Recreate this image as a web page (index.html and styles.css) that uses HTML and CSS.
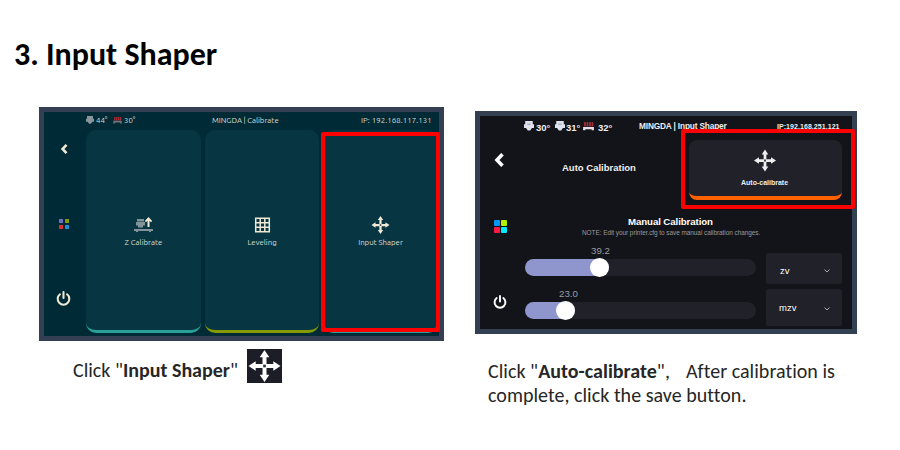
FILE: index.html
```html
<!DOCTYPE html>
<html lang="en">
<head>
<meta charset="utf-8">
<title>Input Shaper</title>
<link rel="stylesheet" href="styles.css">
</head>
<body>
<svg class="defs" aria-hidden="true">
  <symbol id="move" viewBox="0 0 24 24"><path fill="currentColor" d="M12 0l3.600 5.400h-2.100v5.100h5.100V8.400L24 12l-5.400 3.600v-2.100h-5.100v5.100h2.100L12 24l-3.600-5.400h2.100v-5.100H5.400v2.100L0 12l5.400-3.600v2.100h5.100V5.400H8.400z"/><path class="hub" d="M11 11h2v2h-2z"/></symbol>
  <symbol id="power" viewBox="0 0 16 16"><path fill="none" stroke="currentColor" stroke-width="2.200" stroke-linecap="round" d="M8 1.200v6.300M4.200 3.500a6.200 6.200 0 1 0 7.600 0"/></symbol>
  <symbol id="back" viewBox="0 0 10 14"><path fill="none" stroke="currentColor" stroke-width="3.600" d="M8.500 1.200L3 7l5.500 5.800"/></symbol>
  <symbol id="nozzle" viewBox="0 0 12 12"><path fill="currentColor" d="M1.500 0h9v4H12v4.500H9.500L7.500 11.500h-3L2.500 8.500H0V4h1.500z"/><path class="vent" d="M4 3.800h4"/></symbol>
  <symbol id="bed" viewBox="0 0 12 10"><path class="heat" d="M1.700 0l.6 2.500-.6 2.500M4.500 0l.6 2.500-.6 2.500M7.300 0l.6 2.500-.6 2.500M10 0l.6 2.500L10 5"/><path fill="currentColor" d="M0 5.500h12v3.700H9.500V8h-7v1.200H0z"/></symbol>
  <symbol id="chevron" viewBox="0 0 6 4"><path fill="none" stroke="currentColor" d="M.5.5L3 3 5.500.5"/></symbol>
</svg>
<main class="page">
  <h1>3. Input Shaper</h1>
  <div class="columns">
    <section class="left">
      <div class="screen teal">
        <nav class="side">
          <svg class="back"><use href="#back"/></svg>
          <div class="apps"><i></i><i></i><i></i><i></i></div>
          <svg class="power"><use href="#power"/></svg>
        </nav>
        <div class="body">
          <header class="bar">
            <svg class="ic-n"><use href="#nozzle"/></svg><span class="t1">44°</span>
            <svg class="ic-b"><use href="#bed"/></svg><span class="t2">30°</span>
            <span class="title">MINGDA<i>|</i>Calibrate</span><span class="ip">IP: 192.168.117.131</span>
          </header>
          <div class="cards">
            <div class="card cyan">
              <svg viewBox="0 0 19 18"><path fill="#82939a" d="M3 3h7v2.500H3zM2 6h9v3.500H2zM4 9.500h5v2H4zM0 13h19v2h-2v1h-2v-1H4v1H2v-1H0z"/><path fill="#eee8d5" d="M14.500 1L18.200 5 17 6.200l-1.500-1.500V11h-2V4.700L12 6.200 10.800 5z"/></svg>
              <span>Z Calibrate</span>
            </div>
            <div class="card olive">
              <svg viewBox="0 0 18 18"><path fill="none" stroke="#eee8d5" stroke-width="1.500" d="M2.200 2.200h13.600v13.600H2.200zM6.700 2.200v13.600M11.300 2.200v13.600M2.200 6.700h13.600M2.200 11.300h13.600"/></svg>
              <span>Leveling</span>
            </div>
            <div class="card cyan">
              <svg><use href="#move"/></svg>
              <span>Input Shaper</span>
            </div>
          </div>
        </div>
        <div class="mark"></div>
      </div>
      <p class="caption"><span>Click "<b>Input Shaper</b>"</span><svg><use href="#move"/></svg></p>
    </section>
    <section class="right">
      <div class="screen dark">
        <nav class="side">
          <svg class="back"><use href="#back"/></svg>
          <div class="apps"><i></i><i></i><i></i><i></i></div>
          <svg class="power"><use href="#power"/></svg>
        </nav>
        <div class="body">
          <header class="bar">
            <svg class="ic-n"><use href="#nozzle"/></svg><span class="t1">30°</span>
            <svg class="ic-n"><use href="#nozzle"/></svg><span class="t2">31°</span>
            <svg class="ic-b"><use href="#bed"/></svg><span class="t3">32°</span>
            <span class="title">MINGDA | Input Shaper</span><span class="ip">IP:192.168.251.121</span>
          </header>
          <div class="auto">
            <h2>Auto Calibration</h2>
            <div class="button"><svg><use href="#move"/></svg><span>Auto-calibrate</span></div>
          </div>
          <h2 class="manual">Manual Calibration</h2>
          <p class="note">NOTE: Edit your printer.cfg to save manual calibration changes.</p>
          <div class="controls">
            <div class="sliders">
              <div class="slider first"><span>39.2</span><div class="track"><div class="fill"></div></div></div>
              <div class="slider second"><span>23.0</span><div class="track"><div class="fill"></div></div></div>
            </div>
            <div class="selects">
              <div class="select"><span>zv</span><svg><use href="#chevron"/></svg></div>
              <div class="select tall"><span>mzv</span><svg><use href="#chevron"/></svg></div>
            </div>
          </div>
        </div>
        <div class="mark"></div>
      </div>
      <p class="caption"><span class="line1">Click "<b>Auto-calibrate</b>"<span class="comma">,</span>After calibration is</span><br><span class="line2">complete, click the save button.</span></p>
    </section>
  </div>
</main>
</body>
</html>
```
FILE: styles.css
```css
* { box-sizing: border-box; }
body { margin: 0; background: #fff; color: #262626; font-family: Carlito, Calibri, "Open Sans", sans-serif; font-variant-ligatures: none; }
h1, h2, p { margin: 0; }
svg { display: block; flex: none; }
.defs { width: 0; height: 0; position: absolute; }
.hub { fill: #26333d; }
.vent { stroke: #8b93a8; stroke-width: 1.2; }
.heat { fill: none; stroke: #a12b36; stroke-width: 2; }
.page { width: 900px; height: 450px; padding: 35px 0 0 14px; overflow: hidden; }
h1 { height: 72px; font-size: 32px; line-height: 40px; color: #000; white-space: nowrap; }
.columns { display: flex; padding-left: 25px; }
.left { width: 436px; }
.right { padding-top: 4px; }
.screen { position: relative; display: flex; border: 5px solid #343f53; }
.body { flex: none; }
.bar { display: flex; align-items: center; white-space: nowrap; }
.bar > span { flex: none; }
.mark { position: absolute; border: 5px solid #f00; border-radius: 2px; }
.side { display: flex; flex-direction: column; align-items: center; flex: none; }
.apps { display: grid; }

.teal { width: 405px; height: 234px; background: #002b36; color: #dcdcd1; font-family: Ubuntu, "Noto Sans", sans-serif; font-size: 7.8px; }
.teal .side { width: 39px; padding-top: 32px; color: #eee8d5; }
.teal .back { width: 8px; height: 10px; }
.teal .apps { margin-top: 65px; grid-template-columns: 4px 4px; grid-auto-rows: 4px; gap: 2px; }
.teal .apps i:nth-child(1) { background: #6c71c4; }
.teal .apps i:nth-child(2) { background: #859900; }
.teal .apps i:nth-child(3) { background: #dc322f; }
.teal .apps i:nth-child(4) { background: #268bd2; }
.teal .power { width: 15px; height: 15px; margin-top: 62px; }
.teal .body { width: 356px; padding-left: 3px; }
.teal .bar { height: 18px; padding-bottom: 2px; }
.teal .ic-n { width: 8px; height: 8px; color: #87969a; }
.teal .ic-b { width: 9px; height: 7px; color: #71757a; }
.teal .vent { stroke: #4e646b; }
.teal .heat { stroke: #5b2b33; }
.teal .t1 { width: 17px; margin-left: 2px; }
.teal .t2 { width: 88px; margin-left: 2px; }
.teal .title { width: 149px; }
.teal .title i { font-style: normal; margin: 0 1.5px; }
.teal .ip { letter-spacing: .1px; }
.cards { display: grid; grid-template-columns: 115px 114px 115px; gap: 4px; }
.card { height: 203px; border-radius: 10px; background: #073642; border-bottom: 3px solid #2aa198; display: flex; flex-direction: column; align-items: center; padding-top: 86px; }
.card.olive { border-color: #859900; }
.card svg { width: 19px; height: 18px; color: #eee8d5; }
.card span { margin-top: 2px; line-height: 12px; }
.teal .mark { left: 277px; top: 20px; width: 119px; height: 200px; border-width: 4px; }

.dark { width: 382px; height: 223px; border-color: #334052; background: #131419; color: #eee; font-family: "Liberation Sans", sans-serif; }
.dark .side { width: 41px; padding-top: 37px; color: #fff; }
.dark .back { width: 10px; height: 14px; margin-right: 4px; }
.dark .apps { margin-top: 53px; grid-template-columns: 6px 6px; grid-auto-rows: 6px; gap: 1px; }
.dark .apps i { border-radius: 1px; }
.dark .apps i:nth-child(1) { background: #0097f5; }
.dark .apps i:nth-child(2) { background: #b2f000; }
.dark .apps i:nth-child(3) { background: #ff1845; }
.dark .apps i:nth-child(4) { background: #00eaff; }
.dark .power { width: 14px; height: 14px; margin-top: 62px; margin-right: 1px; }
.dark .body { width: 331px; padding-left: 3px; }
.dark .bar { height: 20px; font-weight: bold; }
.dark .ic-n { width: 10px; height: 10px; color: #dfe2ed; }
.dark .ic-b { width: 11px; height: 9px; color: #e4dfe8; }
.dark .t1, .dark .t2, .dark .t3 { font-size: 9.5px; padding-top: 2px; }
.dark .t1 { width: 19px; margin-left: 2px; }
.dark .t2 { width: 17px; margin-left: 1px; }
.dark .t3 { width: 41px; margin-left: 4px; }
.dark .title { width: 138px; font-size: 8.3px; letter-spacing: -.16px; }
.dark .ip { font-size: 7px; letter-spacing: .06px; }
.auto { display: flex; padding: 4px 0 0 38px; }
.auto h2 { width: 127px; padding-top: 22px; font-size: 9.5px; line-height: 12px; white-space: nowrap; }
.button { width: 153px; height: 60px; border-radius: 8px; background: #202129; border-bottom: 4px solid #ff6000; display: flex; flex-direction: column; align-items: center; padding: 9px 2px 0 0; font-size: 7px; font-weight: bold; }
.button svg { width: 22px; height: 23px; }
.button span { line-height: 10px; margin-top: 6px; }
.manual { margin: 16px 0 0 104px; font-size: 9.7px; line-height: 12px; letter-spacing: -.1px; color: #fff; white-space: nowrap; }
.note { margin: 0 0 0 58px; font-size: 6.45px; line-height: 9px; letter-spacing: -.05px; color: #98999e; white-space: nowrap; }
.controls { display: flex; padding: 8px 0 0 1px; }
.sliders { width: 241px; }
.slider { height: 43px; font-size: 9.7px; line-height: 12px; color: #9c9ca3; }
.slider > span { display: block; }
.first > span { padding-left: 66px; }
.second > span { padding-left: 34px; }
.track { width: 231px; height: 17px; margin-top: 2px; border-radius: 9px; background: #202129; }
.fill { height: 17px; border-radius: 9px; background: #8e96cd; display: flex; align-items: center; justify-content: flex-end; }
.first .fill { width: 83.5px; }
.second .fill { width: 50px; }
.fill::after { content: ""; width: 19px; height: 19px; border-radius: 50%; background: #fff; flex: none; }
.selects { display: grid; grid-template-rows: 31px 37px; gap: 5px; padding-top: 8px; }
.select { width: 76px; display: flex; align-items: center; justify-content: space-between; padding: 3px 12px 0 14px; background: #202129; border-radius: 2px; font-size: 9.5px; color: #fff; }
.select.tall { padding: 0 12px 0 13px; }
.select svg { width: 6px; height: 4px; color: #aaa; margin-top: 2px; }
.dark .mark { left: 201px; top: 13px; width: 174px; height: 80px; border-width: 4px; }

.caption { font-size: 20px; line-height: 24px; white-space: nowrap; }
.left .caption { display: flex; padding: 8px 0 0 34px; }
.left .caption span { width: 174px; padding-top: 9px; }
.left .caption svg { width: 35px; height: 34px; background: #1c1d27; color: #fff; padding: 1px; }
.right .caption { padding: 26px 0 0 13px; line-height: 23.5px; }
.comma { display: inline-block; width: 21px; }
.line1, .line2 { letter-spacing: .03px; }
```
